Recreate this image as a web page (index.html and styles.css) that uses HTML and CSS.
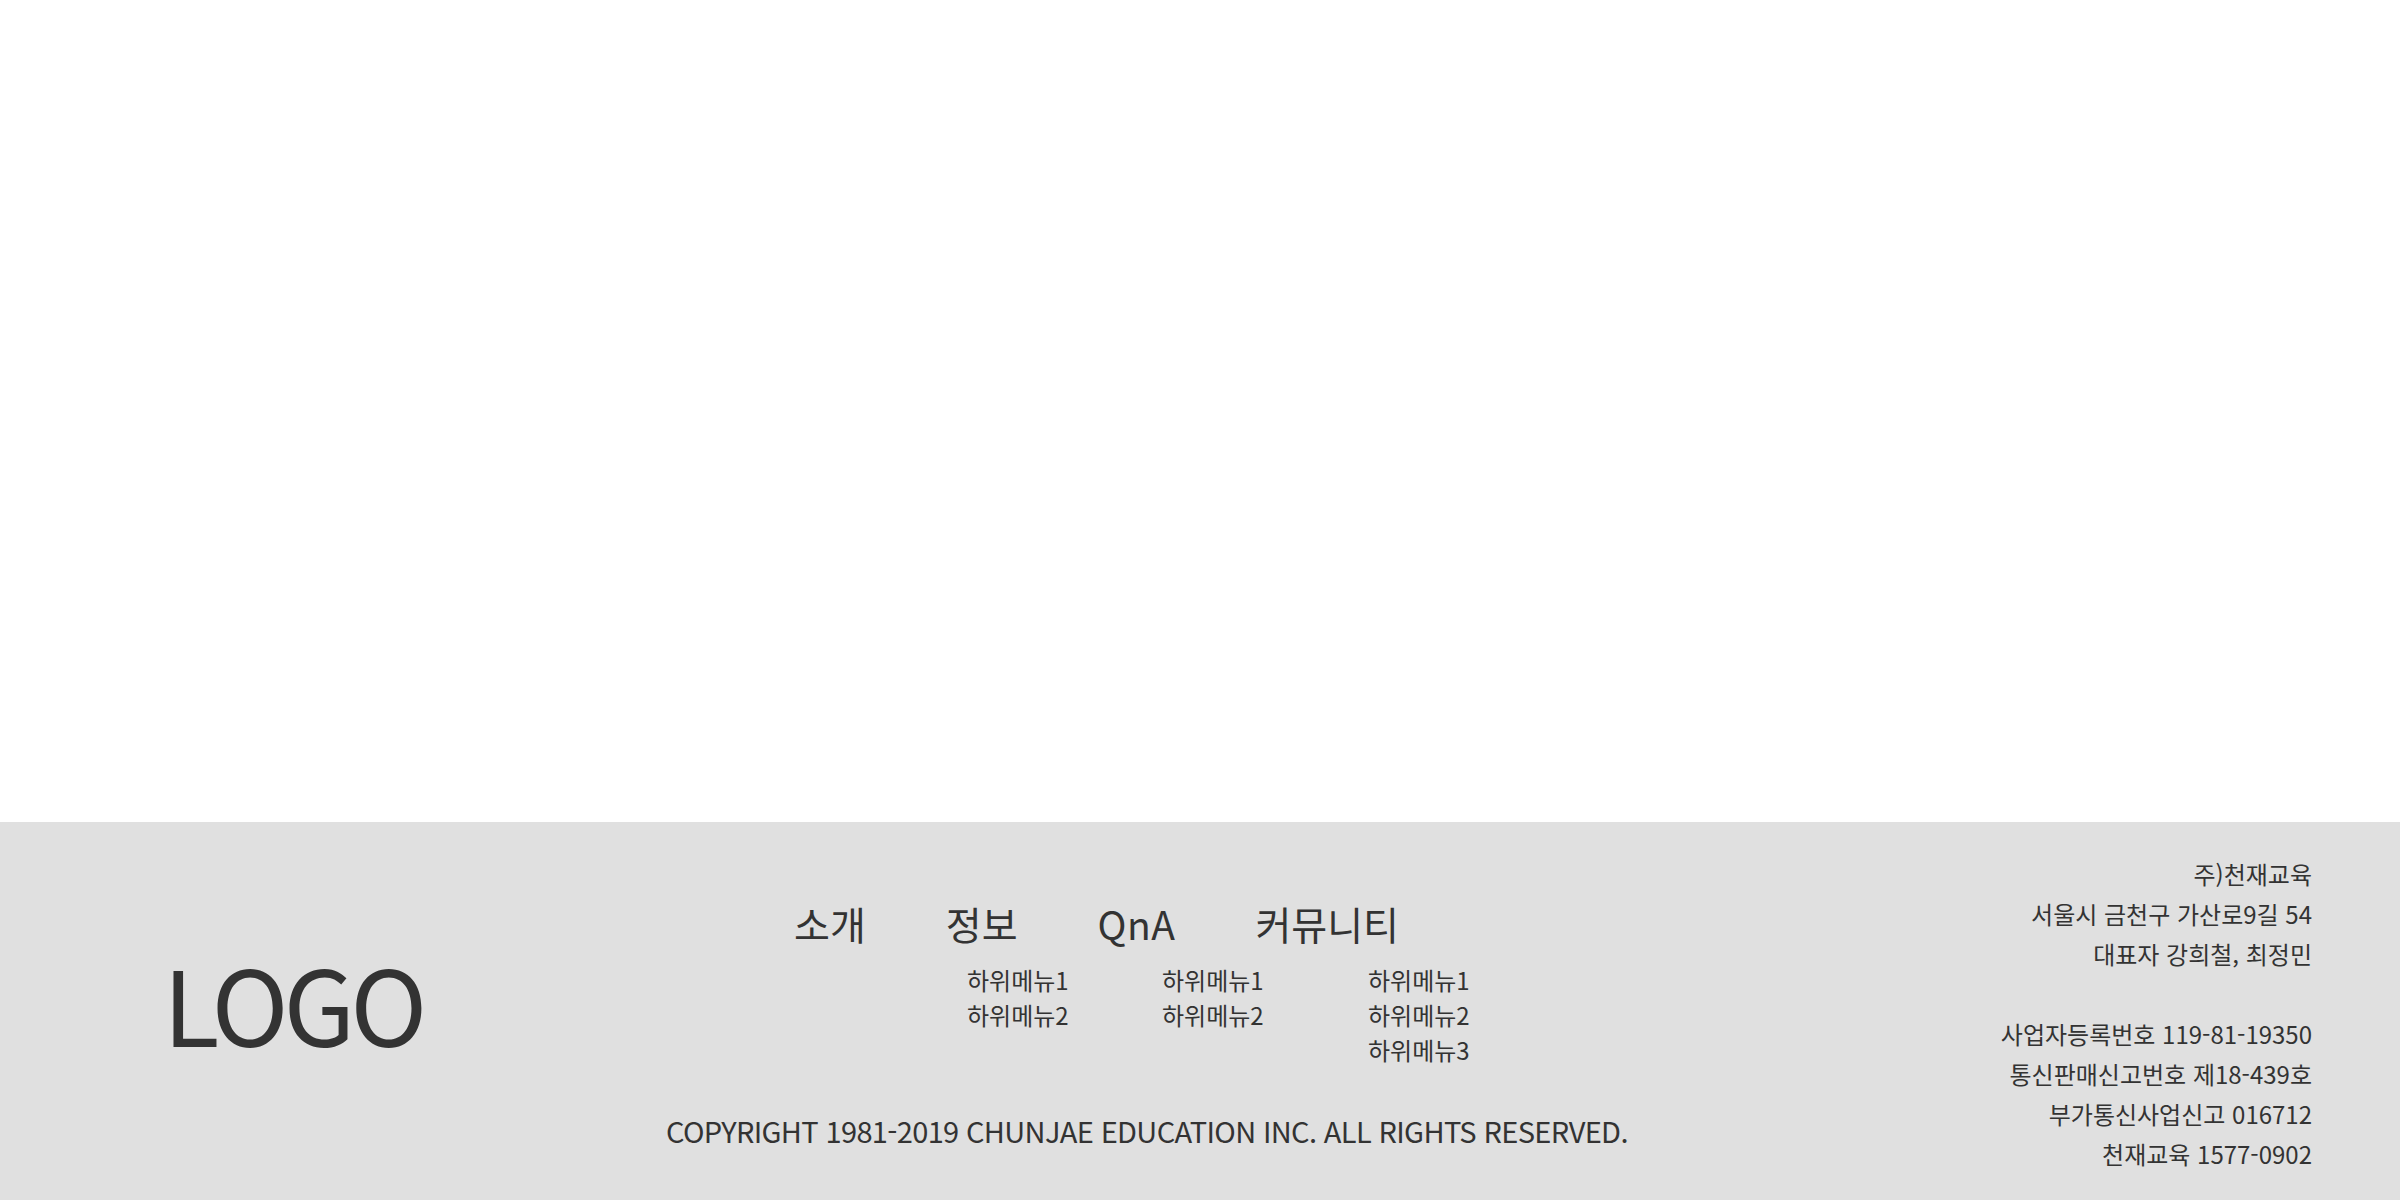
FILE: index.html
```html
<!DOCTYPE html>
<html lang="ko">
<head>
<meta charset="utf-8">
<title>천재교육</title>
<link rel="stylesheet" href="styles.css">
</head>
<body>
<div class="page">
  <main class="content"></main>
  <footer class="footer">
    <div class="logo">LOGO</div>
    <div class="center">
      <ul class="gnb">
        <li>소개</li>
        <li>정보</li>
        <li>QnA</li>
        <li>커뮤니티</li>
      </ul>
      <div class="submenus">
        <ul class="sub">
          <li>하위메뉴1</li>
          <li>하위메뉴2</li>
        </ul>
        <ul class="sub">
          <li>하위메뉴1</li>
          <li>하위메뉴2</li>
        </ul>
        <ul class="sub">
          <li>하위메뉴1</li>
          <li>하위메뉴2</li>
          <li>하위메뉴3</li>
        </ul>
      </div>
      <p class="copyright">COPYRIGHT 1981-2019 CHUNJAE EDUCATION INC. ALL RIGHTS RESERVED.</p>
    </div>
    <address class="info">
      <span>주)천재교육</span>
      <span>서울시 금천구 가산로9길 54</span>
      <span>대표자 강희철, 최정민</span>
      <span class="blank">&nbsp;</span>
      <span>사업자등록번호 119-81-19350</span>
      <span>통신판매신고번호 제18-439호</span>
      <span>부가통신사업신고 016712</span>
      <span>천재교육 1577-0902</span>
    </address>
  </footer>
</div>
</body>
</html>
```
FILE: styles.css
```css
* {
  box-sizing: border-box;
}

html, body {
  margin: 0;
  padding: 0;
  background: #ffffff;
}

body {
  font-family: "Noto Sans CJK KR", "Noto Sans", sans-serif;
  color: #333333;
}

.page {
  display: flex;
  flex-direction: column;
  height: 100vh;
}

.content {
  flex: 1;
}

.footer {
  height: 378px;
  background: #e0e0e0;
  display: flex;
  align-items: flex-start;
  padding: 30px 88px 0 163px;
}

.logo {
  width: 501px;
  flex-shrink: 0;
  margin-top: 98px;
  font-size: 104px;
  line-height: 104px;
  letter-spacing: -5px;
}

.center {
  margin-top: 43px;
  display: flex;
  flex-direction: column;
}

.gnb {
  list-style: none;
  margin: 0;
  padding: 0 0 0 130px;
  display: flex;
  gap: 80px;
  font-size: 39px;
}

.gnb li:nth-child(3) {
  letter-spacing: 0.5px;
}

.submenus {
  margin-top: 10.5px;
  padding-left: 303px;
  display: grid;
  grid-template-columns: 195px 206px auto;
}

.sub {
  list-style: none;
  margin: 0;
  padding: 0;
  font-size: 24px;
  line-height: 35px;
}

.copyright {
  margin: 42.5px 0 0;
  padding-left: 2px;
  font-size: 29px;
  letter-spacing: -0.65px;
}

.info {
  margin-top: 1.5px;
  margin-left: auto;
  display: flex;
  flex-direction: column;
  align-items: flex-end;
  font-style: normal;
  font-size: 24px;
  line-height: 40px;
}
```
